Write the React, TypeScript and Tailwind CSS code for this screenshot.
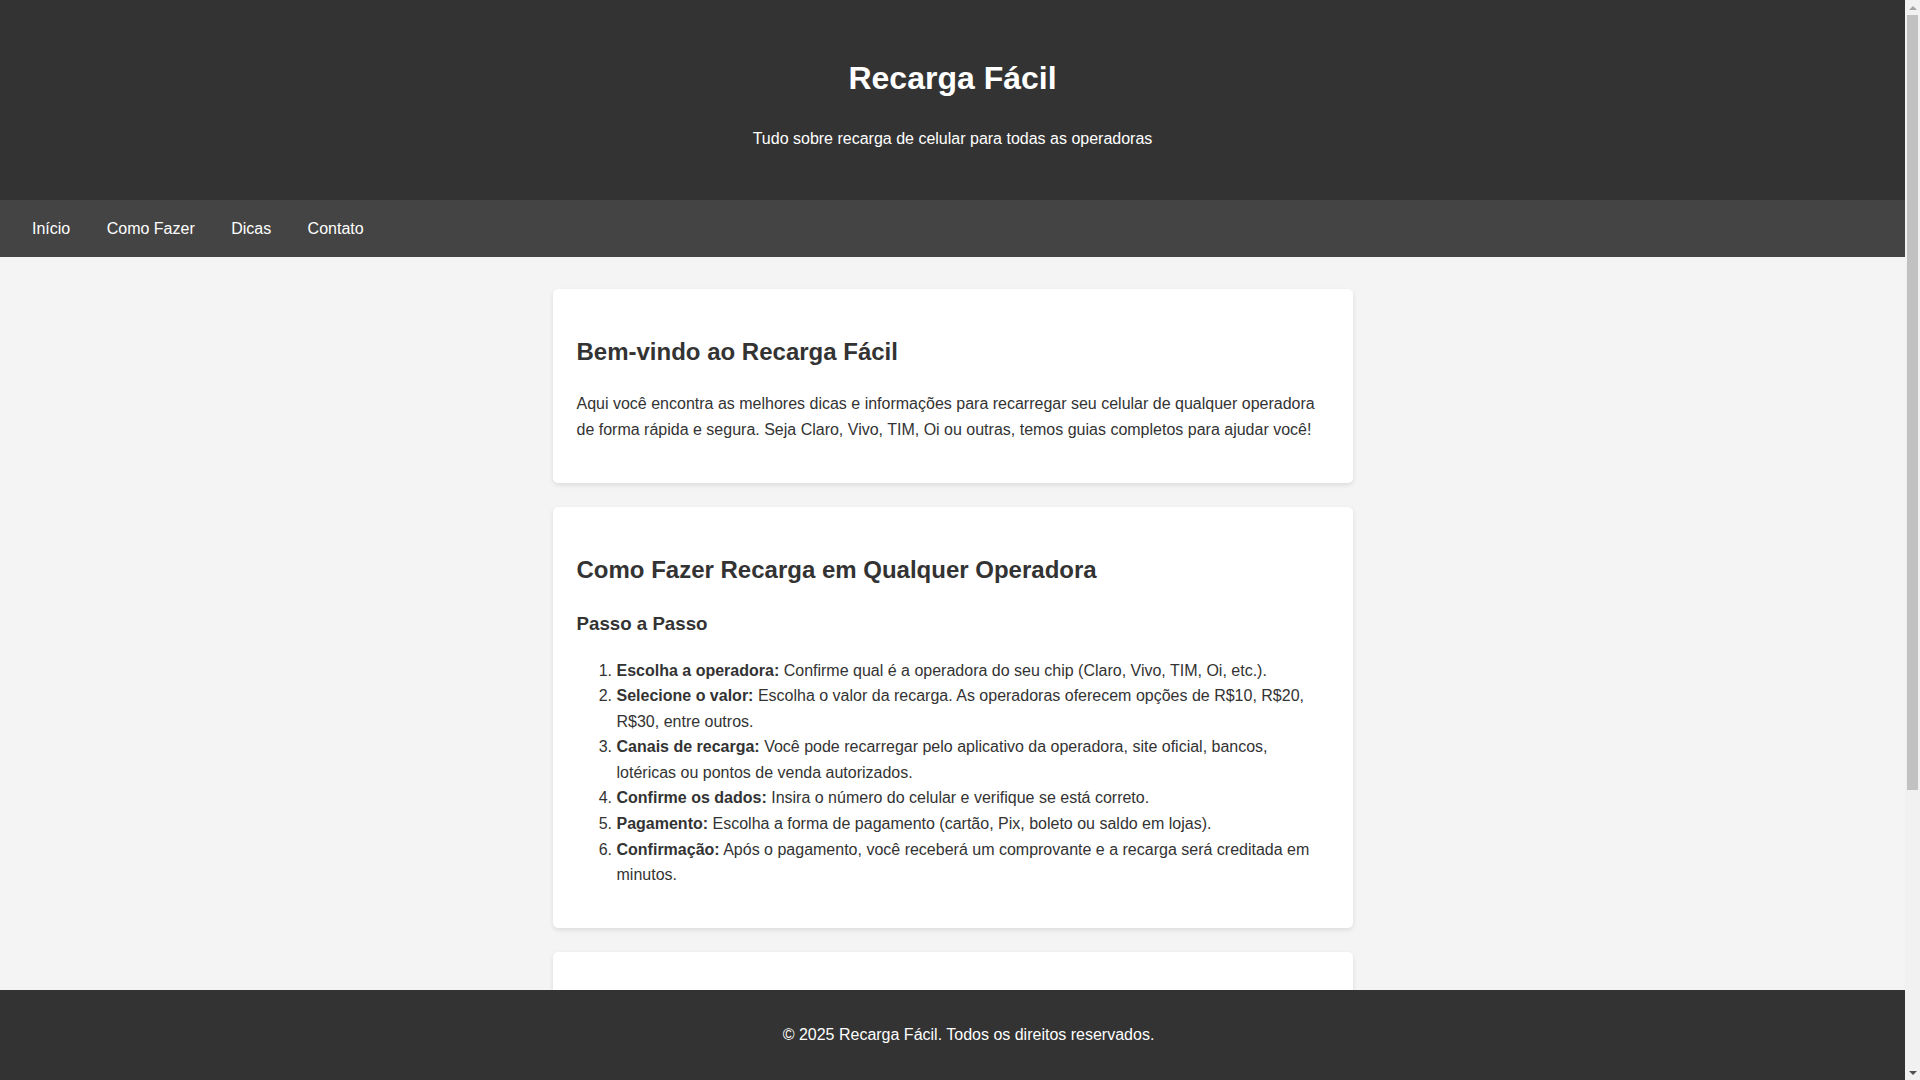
const steps = [
  {
    label: 'Escolha a operadora:',
    text: 'Confirme qual é a operadora do seu chip (Claro, Vivo, TIM, Oi, etc.).',
  },
  {
    label: 'Selecione o valor:',
    text: 'Escolha o valor da recarga. As operadoras oferecem opções de R$10, R$20, R$30, entre outros.',
  },
  {
    label: 'Canais de recarga:',
    text: 'Você pode recarregar pelo aplicativo da operadora, site oficial, bancos, lotéricas ou pontos de venda autorizados.',
  },
  {
    label: 'Confirme os dados:',
    text: 'Insira o número do celular e verifique se está correto.',
  },
  {
    label: 'Pagamento:',
    text: 'Escolha a forma de pagamento (cartão, Pix, boleto ou saldo em lojas).',
  },
  {
    label: 'Confirmação:',
    text: 'Após o pagamento, você receberá um comprovante e a recarga será creditada em minutos.',
  },
];

const tips = [
  'Aproveite as promoções de bônus oferecidas pelas operadoras.',
  'Prefira canais oficiais para evitar golpes e fraudes.',
  'Guarde sempre o comprovante da recarga.',
  'Confira o saldo após a recarga pelo aplicativo ou discando o código da operadora.',
  'Avalie os planos pré-pagos com internet incluída.',
  'Ative a recarga automática para não ficar sem crédito.',
  'Desconfie de ofertas com valores muito abaixo do normal.',
];

function Card({ children }: { children: React.ReactNode }) {
  return <section className="rounded-[5px] bg-white p-6 shadow-[0_2px_5px_rgba(0,0,0,0.1)]">{children}</section>;
}

// classic browser scrollbar, drawn since the headless window hides its own
function Scrollbar() {
  return (
    <div className="fixed right-0 top-0 z-10 flex h-screen w-[15px] flex-col bg-[#f1f1f1]">
      <div className="flex h-[15px] items-center justify-center">
        <svg viewBox="0 0 8 4" className="h-[4px] w-[8px]">
          <path d="M0 4 L4 0 L8 4 Z" fill="#a3a3a3" />
        </svg>
      </div>
      <div className="flex-1">
        <div className="mx-[2px] h-[775px] bg-[#c1c1c1]" />
      </div>
      <div className="flex h-[15px] items-center justify-center">
        <svg viewBox="0 0 8 4" className="h-[4px] w-[8px]">
          <path d="M0 0 L8 0 L4 4 Z" fill="#505050" />
        </svg>
      </div>
    </div>
  );
}

export default function App() {
  return (
    <div className="min-h-screen bg-[#f4f4f4] font-['Liberation_Sans',Arial,sans-serif] text-base leading-[1.6] text-[#333]">
      <div className="w-[calc(100%-15px)]">
        <header className="bg-[#333] py-8 text-center text-white">
          <h1 className="my-[21.44px] text-[32px] font-bold leading-[1.6]">Recarga Fácil</h1>
          <p className="my-4">Tudo sobre recarga de celular para todas as operadoras</p>
        </header>

        <nav className="flex gap-[4.45px] bg-[#444] p-4">
          <a href="#" className="px-4 text-white">Início</a>
          <a href="#" className="px-4 text-white">Como Fazer</a>
          <a href="#" className="px-4 text-white">Dicas</a>
          <a href="#" className="px-4 text-white">Contato</a>
        </nav>

        <main className="mx-auto flex max-w-[800px] flex-col gap-6 py-8">
          <Card>
            <h2 className="my-[19.92px] text-[24px] font-bold leading-[1.6]">Bem-vindo ao Recarga Fácil</h2>
            <p className="my-4">
              Aqui você encontra as melhores dicas e informações para recarregar seu celular de qualquer operadora de forma
              rápida e segura. Seja Claro, Vivo, TIM, Oi ou outras, temos guias completos para ajudar você!
            </p>
          </Card>

          <Card>
            <h2 className="my-[19.92px] text-[24px] font-bold leading-[1.6]">Como Fazer Recarga em Qualquer Operadora</h2>
            <h3 className="my-[18.72px] text-[18.72px] font-bold leading-[1.6]">Passo a Passo</h3>
            <ol className="my-4 list-decimal pl-10">
              {steps.map((step) => (
                <li key={step.label}>
                  <strong className="font-bold">{step.label}</strong> {step.text}
                </li>
              ))}
            </ol>
          </Card>

          <Card>
            <h2 className="my-[19.92px] text-[24px] font-bold leading-[1.6]">Dicas para Economizar na Recarga</h2>
            <p className="my-4">
              Recarregar o celular pode ser simples e barato. Confira algumas dicas para aproveitar melhor o seu crédito e
              evitar problemas na hora de fazer a recarga.
            </p>
            <ul className="my-4 list-disc pl-10">
              {tips.map((tip) => (
                <li key={tip}>{tip}</li>
              ))}
            </ul>
          </Card>
        </main>
      </div>

      <footer className="fixed bottom-0 left-0 w-[calc(100%+17px)] bg-[#333] p-4 text-center text-white">
        <p className="my-4">© 2025 Recarga Fácil. Todos os direitos reservados.</p>
      </footer>

      <Scrollbar />
    </div>
  );
}
